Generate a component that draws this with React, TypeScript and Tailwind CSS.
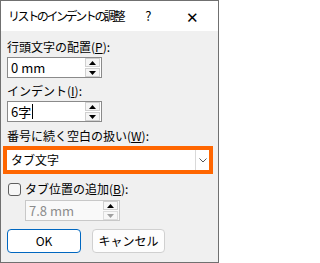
import React from 'react';

const font = { fontFamily: '"Noto Sans CJK JP", "Noto Sans", sans-serif' };

function Spin({ disabled = false }: { disabled?: boolean }) {
  return (
    <div className="flex flex-col gap-[1px] py-[1px] pr-[1px]">
      <div className={`flex h-[9px] w-[15px] items-center justify-center border ${disabled ? 'border-[#cfcfcf] bg-[#f7f7f7]' : 'border-[#d0d0d0] bg-[#f5f5f5]'}`}>
        <svg width="7" height="4" viewBox="0 0 7 4"><path d="M0 4 L3.5 0 L7 4 Z" fill="#000" /></svg>
      </div>
      <div className={`flex h-[9px] w-[15px] items-center justify-center border ${disabled ? 'border-[#dcdcdc] bg-[#f7f7f7]' : 'border-[#d0d0d0] bg-[#f5f5f5]'}`}>
        <svg width="7" height="4" viewBox="0 0 7 4"><path d="M0 0 L7 0 L3.5 4 Z" fill={disabled ? '#a0a0a0' : '#000'} /></svg>
      </div>
    </div>
  );
}

function SpinInput({ value, caret = false, disabled = false }: { value: string; caret?: boolean; disabled?: boolean }) {
  return (
    <div className={`flex h-[21px] w-[95px] items-center justify-between border ${disabled ? 'border-[#c8c8c8] bg-[#f9f9f9]' : 'border-[#8a8a8a] bg-white'}`}>
      <span className={`flex items-center pl-[3px] text-[13px] leading-none ${disabled ? 'text-[#8c8c8c]' : 'text-black'}`}>
        {value}
        {caret && <span className="ml-[1px] inline-block h-[15px] w-[1px] bg-black" />}
      </span>
      <Spin disabled={disabled} />
    </div>
  );
}

export default function App() {
  return (
    <div className="h-[263px] w-[219px] overflow-hidden border border-[#707070] bg-[#f0f0f0] text-black" style={font}>
      <div className="flex h-[30px] items-center bg-white pl-[7px]">
        <span className="text-[12px] tracking-[-2.4px]">リストのインデントの調整</span>
        <span className="ml-[22px] text-[13px]">?</span>
        <span className="ml-auto mr-[19px] text-[15px] font-light leading-none">✕</span>
      </div>
      <div className="flex flex-col px-[6px] pt-[8px]">
        <div className="text-[12px] leading-[16px]">
          行頭文字の配置(<span className="underline">P</span>):
        </div>
        <div className="mt-[2px]">
          <SpinInput value="0 mm" />
        </div>
        <div className="mt-[5px] text-[12px] leading-[16px]">
          インデント(<span className="underline">I</span>):
        </div>
        <div className="mt-[2px]">
          <SpinInput value="6字" caret />
        </div>
        <div className="mt-[6px] text-[12px] leading-[16px]">
          番号に続く空白の扱い(<span className="underline">W</span>):
        </div>
        <div className="-ml-[4px] mt-[2px] w-[210px] border-4 border-[#ff6600] bg-white">
          <div className="flex h-[20px] items-center justify-between">
            <span className="pl-[4px] text-[12px]">タブ文字</span>
            <div className="flex h-full w-[14px] items-center justify-center border-l border-[#d9d9d9]">
              <svg width="8" height="5" viewBox="0 0 8 5"><path d="M0.5 0.5 L4 4 L7.5 0.5" fill="none" stroke="#555" strokeWidth="1" /></svg>
            </div>
          </div>
        </div>
        <div className="mt-[7px] flex items-center gap-[4px] pl-[1px]">
          <div className="h-[13px] w-[13px] rounded-[3px] border border-[#5f5f5f] bg-[#f7f7f7]" />
          <span className="text-[12px] leading-[16px]">
            タブ位置の追加(<span className="underline">B</span>):
          </span>
        </div>
        <div className="mt-[3px] pl-[18px]">
          <SpinInput value="7.8 mm" disabled />
        </div>
        <div className="mt-[8px] flex gap-[11px]">
          <div className="flex h-[24px] w-[74px] items-center justify-center rounded-[4px] border-[1.5px] border-[#0067c0] bg-white text-[12px]">
            OK
          </div>
          <div className="flex h-[24px] w-[73px] items-center justify-center rounded-[4px] border border-[#d0d0d0] bg-[#fdfdfd] text-[12px]">
            キャンセル
          </div>
        </div>
      </div>
    </div>
  );
}
